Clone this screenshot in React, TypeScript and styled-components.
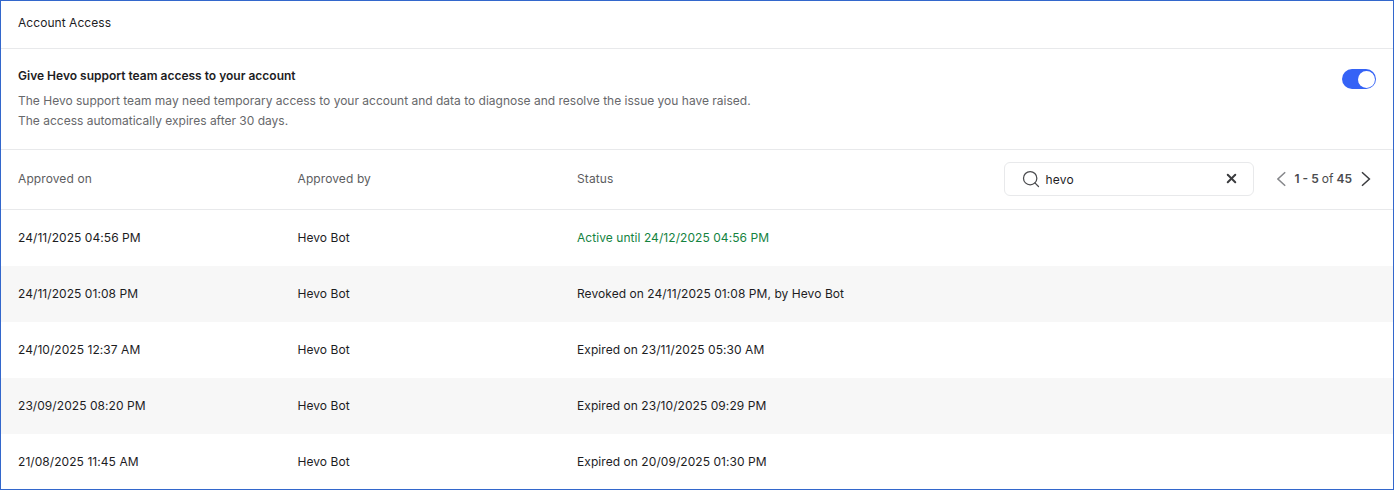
import React from "react";
import styled, { createGlobalStyle } from "styled-components";
import { X, Search } from "lucide-react";

const GlobalStyle = createGlobalStyle`
  html, body {
    margin: 0;
    padding: 0;
    background: #fff;
  }
  body {
    font-family: Inter, "Liberation Sans", sans-serif;
    color: #1d1d1f;
  }
`;

const Panel = styled.div`
  box-sizing: border-box;
  width: 1394px;
  height: 490px;
  overflow: hidden;
  border: 1px solid #3367cc;
`;

const Title = styled.div`
  box-sizing: border-box;
  height: 48px;
  display: flex;
  align-items: center;
  padding: 0 17px 4px;
  font-size: 12px;
  letter-spacing: 0.05px;
  border-bottom: 1px solid #e8e9eb;
`;

const Consent = styled.section`
  box-sizing: border-box;
  height: 101px;
  display: flex;
  justify-content: space-between;
  padding: 19px 17px 0;
  border-bottom: 1px solid #e8e9eb;
`;

const ConsentTitle = styled.div`
  font-size: 12px;
  line-height: 16px;
  font-weight: 600;
`;

const ConsentText = styled.p`
  margin: 7px 0 0;
  font-size: 12px;
  line-height: 20px;
  color: #67686b;
`;

const Toggle = styled.div`
  box-sizing: border-box;
  width: 34px;
  height: 20px;
  margin-top: 1px;
  padding: 1.5px;
  border-radius: 10px;
  background: #3563f6;
  display: flex;
  justify-content: flex-end;
`;

const Knob = styled.span`
  width: 17px;
  height: 17px;
  border-radius: 50%;
  background: #fff;
`;

const TableRow = styled.div<{ $shaded?: boolean }>`
  box-sizing: border-box;
  height: 56px;
  display: grid;
  grid-template-columns: 279.5px 279.5px 1fr;
  align-items: center;
  padding: 0 17px 2px;
  font-size: 12px;
  letter-spacing: 0.06px;
  background: ${(p) => (p.$shaded ? "#f7f7f7" : "#fff")};
`;

const TableHead = styled(TableRow)`
  height: 60px;
  color: #5c5d60;
  letter-spacing: 0.1px;
  border-bottom: 1px solid #e8e9eb;
`;

const StatusCell = styled.div<{ $active?: boolean }>`
  color: ${(p) => (p.$active ? "#14833f" : "inherit")};
`;

const HeadStatus = styled.div`
  display: flex;
  align-items: center;
  justify-content: space-between;
`;

const Tools = styled.div`
  display: flex;
  align-items: center;
  margin-right: 5px;
`;

const SearchBox = styled.div`
  box-sizing: border-box;
  width: 250px;
  height: 34px;
  display: flex;
  align-items: center;
  padding: 0 14px 0 16px;
  border: 1px solid #e8e9eb;
  border-radius: 6px;
  color: #1d1d1f;
`;

const SearchValue = styled.span`
  flex: 1;
  margin-left: 5px;
  padding-top: 1px;
  letter-spacing: 0.2px;
`;

const Pager = styled.div`
  display: flex;
  align-items: center;
  margin-left: 23px;
  color: #4a4b4e;
`;

const PageLabel = styled.span`
  margin: 0 9px 0 8px;
  font-weight: 600;
  letter-spacing: 0;
`;

const PageWord = styled.span`
  font-weight: 400;
`;

const Chevron = ({ dir, color }: { dir: "left" | "right"; color: string }) => (
  <svg width="10" height="16" viewBox="0 0 10 16" fill="none">
    <path
      d={dir === "left" ? "M8.2 1.2 .9 8 8.2 14.8" : "M1 1.2 8.4 8 1 14.8"}
      stroke={color}
      strokeWidth="1.5"
    />
  </svg>
);

const rows = [
  { on: "24/11/2025 04:56 PM", status: "Active until 24/12/2025 04:56 PM", active: true },
  { on: "24/11/2025 01:08 PM", status: "Revoked on 24/11/2025 01:08 PM, by Hevo Bot" },
  { on: "24/10/2025 12:37 AM", status: "Expired on 23/11/2025 05:30 AM" },
  { on: "23/09/2025 08:20 PM", status: "Expired on 23/10/2025 09:29 PM" },
  { on: "21/08/2025 11:45 AM", status: "Expired on 20/09/2025 01:30 PM" },
];

export default function App() {
  return (
    <Panel>
      <GlobalStyle />
      <Title>Account Access</Title>
      <Consent>
        <div>
          <ConsentTitle>Give Hevo support team access to your account</ConsentTitle>
          <ConsentText>
            The Hevo support team may need temporary access to your account and data to diagnose and resolve the issue you have raised.
            <br />
            The access automatically expires after 30 days.
          </ConsentText>
        </div>
        <Toggle>
          <Knob />
        </Toggle>
      </Consent>
      <TableHead>
        <div>Approved on</div>
        <div>Approved by</div>
        <HeadStatus>
          <span>Status</span>
          <Tools>
            <SearchBox>
              <Search size={20} strokeWidth={1.5} color="#4a4b4e" />
              <SearchValue>hevo</SearchValue>
              <X size={15} strokeWidth={3.2} color="#3a3b3e" />
            </SearchBox>
            <Pager>
              <Chevron dir="left" color="#85868a" />
              <PageLabel>
                1 - 5 <PageWord>of</PageWord> 45
              </PageLabel>
              <Chevron dir="right" color="#3a3b3e" />
            </Pager>
          </Tools>
        </HeadStatus>
      </TableHead>
      {rows.map((row, i) => (
        <TableRow key={row.on} $shaded={i % 2 === 1}>
          <div>{row.on}</div>
          <div>Hevo Bot</div>
          <StatusCell $active={row.active}>{row.status}</StatusCell>
        </TableRow>
      ))}
    </Panel>
  );
}
